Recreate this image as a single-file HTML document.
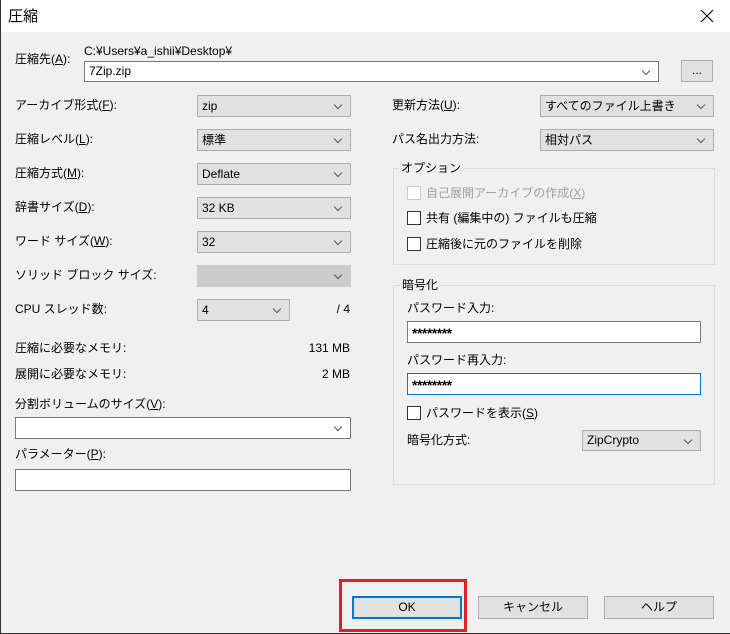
<!DOCTYPE html>
<html><head><meta charset="utf-8"><style>
*{box-sizing:border-box;margin:0;padding:0}
body{width:730px;height:634px;background:#f0f0f0;font-family:"Liberation Sans","Noto Sans CJK JP",sans-serif;font-size:12px;color:#000;position:relative;overflow:hidden}
.a{position:absolute;white-space:nowrap;line-height:14px}
.box{position:absolute}
.cb{position:absolute;background:#e1e1e1;border:1px solid #adadad;height:22px;padding-left:4px;line-height:20px}
.cb::after,.wc::after{content:"";position:absolute;right:9px;top:6px;width:5px;height:5px;border-right:1px solid #555;border-bottom:1px solid #555;transform:rotate(45deg)}
.wc{position:absolute;background:#fff;border:1px solid #7a7a7a;height:22px;padding-left:4px;line-height:20px}
.in{position:absolute;background:#fff;border:1px solid #7a7a7a;height:22px;padding-left:4px;line-height:20px}
.pw{font-size:14px;font-weight:bold;line-height:22px;letter-spacing:-0.5px}
.chk{position:absolute;width:14px;height:14px;border:1px solid #333;background:#fff}
.grp{position:absolute;border:1px solid #dcdcdc}
.gl{position:absolute;background:#f0f0f0;padding:0 2px;line-height:14px}
.btn{position:absolute;background:#e1e1e1;border:1px solid #adadad;height:23px;text-align:center;line-height:21px}
u{text-decoration:underline}
</style></head><body>
<div class="box" style="left:0;top:0;width:730px;height:32px;background:#fff"></div>
<div class="a" style="left:8px;top:8px;font-size:15px;line-height:17px">圧縮</div>
<svg class="box" style="left:700px;top:9px" width="14" height="14"><path d="M1 1L13 13M13 1L1 13" stroke="#000" stroke-width="1.1"/></svg>
<div class="box" style="left:0;top:0;width:1px;height:634px;background:#333"></div>
<div class="box" style="left:0;top:633px;width:730px;height:1px;background:#333"></div>

<div class="a" style="left:15px;top:52px">圧縮先(<u>A</u>):</div>
<div class="a" style="left:84px;top:44px">C:¥Users¥a_ishii¥Desktop¥</div>
<div class="wc" style="left:84px;top:61px;width:575px;height:21px;line-height:19px">7Zip.zip</div>
<div class="btn" style="left:681px;top:60px;width:32px;height:22px;line-height:18px">...</div>

<div class="a" style="left:15px;top:98px">アーカイブ形式(<u>F</u>):</div>
<div class="cb" style="left:197px;top:95px;width:154px">zip</div>
<div class="a" style="left:15px;top:132px">圧縮レベル(<u>L</u>):</div>
<div class="cb" style="left:197px;top:129px;width:154px">標準</div>
<div class="a" style="left:15px;top:166px">圧縮方式(<u>M</u>):</div>
<div class="cb" style="left:197px;top:163px;width:154px">Deflate</div>
<div class="a" style="left:15px;top:200px">辞書サイズ(<u>D</u>):</div>
<div class="cb" style="left:197px;top:197px;width:154px">32 KB</div>
<div class="a" style="left:15px;top:234px">ワード サイズ(<u>W</u>):</div>
<div class="cb" style="left:197px;top:231px;width:154px">32</div>
<div class="a" style="left:15px;top:268px">ソリッド ブロック サイズ:</div>
<div class="cb" style="left:197px;top:265px;width:154px;background:#ccc;border-color:#ccc"></div>
<div class="a" style="left:15px;top:302px">CPU スレッド数:</div>
<div class="cb" style="left:197px;top:299px;width:93px">4</div>
<div class="a" style="left:330px;top:302px;width:20px;text-align:right">/ 4</div>
<div class="a" style="left:15px;top:341px">圧縮に必要なメモリ:</div>
<div class="a" style="left:280px;top:341px;width:70px;text-align:right">131 MB</div>
<div class="a" style="left:15px;top:367px">展開に必要なメモリ:</div>
<div class="a" style="left:280px;top:367px;width:70px;text-align:right">2 MB</div>
<div class="a" style="left:15px;top:397px">分割ボリュームのサイズ(<u>V</u>):</div>
<div class="wc" style="left:15px;top:417px;width:336px">&nbsp;</div>
<div class="a" style="left:15px;top:447px">パラメーター(<u>P</u>):</div>
<div class="in" style="left:15px;top:469px;width:336px"></div>

<div class="a" style="left:392px;top:98px">更新方法(<u>U</u>):</div>
<div class="cb" style="left:540px;top:95px;width:174px">すべてのファイル上書き</div>
<div class="a" style="left:392px;top:132px">パス名出力方法:</div>
<div class="cb" style="left:540px;top:129px;width:174px">相対パス</div>

<div class="grp" style="left:393px;top:168px;width:322px;height:97px"></div>
<div class="gl" style="left:399px;top:161px">オプション</div>
<div class="chk" style="left:407px;top:186px;border-color:#ccc"></div>
<div class="a" style="left:426px;top:186px;color:#a0a0a0">自己展開アーカイブの作成(<u>X</u>)</div>
<div class="chk" style="left:407px;top:211px"></div>
<div class="a" style="left:426px;top:211px">共有 (編集中の) ファイルも圧縮</div>
<div class="chk" style="left:407px;top:237px"></div>
<div class="a" style="left:426px;top:237px">圧縮後に元のファイルを削除</div>

<div class="grp" style="left:393px;top:285px;width:322px;height:200px"></div>
<div class="gl" style="left:400px;top:278px">暗号化</div>
<div class="a" style="left:407px;top:301px">パスワード入力:</div>
<div class="in pw" style="left:407px;top:321px;width:294px">********</div>
<div class="a" style="left:407px;top:353px">パスワード再入力:</div>
<div class="in pw" style="left:407px;top:373px;width:294px;border-color:#0078d7">********</div>
<div class="chk" style="left:407px;top:406px"></div>
<div class="a" style="left:426px;top:406px">パスワードを表示(<u>S</u>)</div>
<div class="a" style="left:407px;top:433px">暗号化方式:</div>
<div class="cb" style="left:582px;top:430px;width:119px;height:21px;line-height:19px">ZipCrypto</div>

<div class="btn" style="left:352px;top:596px;width:110px;border:2px solid #0078d7;line-height:19px">OK</div>
<div class="btn" style="left:478px;top:596px;width:110px">キャンセル</div>
<div class="btn" style="left:604px;top:596px;width:110px">ヘルプ</div>
<div class="box" style="left:339px;top:579px;width:128px;height:53px;border:3px solid #e0202a"></div>
</body></html>
